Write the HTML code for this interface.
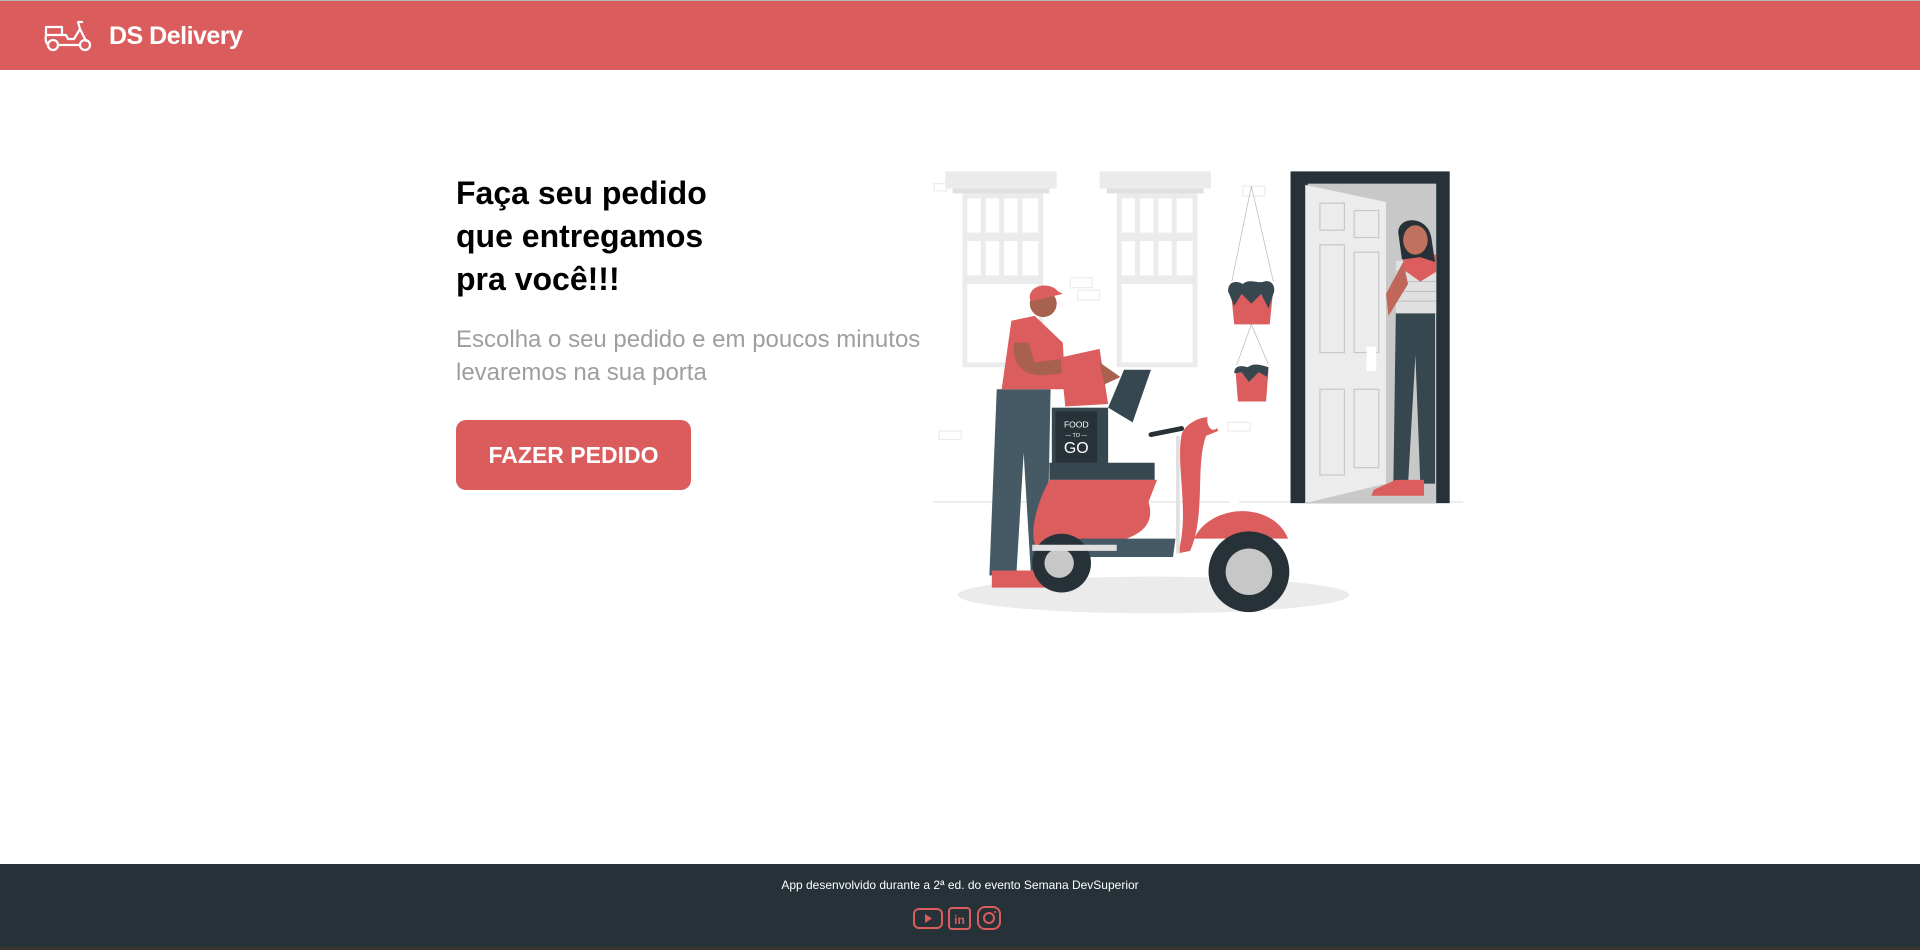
<!DOCTYPE html>
<html><head><meta charset="utf-8"><style>
*{margin:0;padding:0;box-sizing:border-box}
body{width:1920px;height:950px;position:relative;background:#fff;font-family:"Liberation Sans",sans-serif;overflow:hidden}
.top{position:absolute;left:0;top:0;width:1920px;height:1px;background:#b8b8b8}
header{position:absolute;left:0;top:1px;width:1920px;height:69px;background:#db5c5c}
.brand{position:absolute;left:109px;top:21px;color:#fff;font-weight:bold;font-size:25px;letter-spacing:-0.5px}
h1{position:absolute;left:456px;top:172px;font-size:32px;line-height:43px;font-weight:bold;color:#000}
.sub{position:absolute;left:456px;top:323px;font-size:24px;line-height:33px;color:#9e9e9e}
.btn{position:absolute;left:456px;top:420px;width:235px;height:70px;background:#db5c5c;border-radius:10px;color:#fff;font-weight:bold;font-size:23px;text-align:center;line-height:70px}
footer{position:absolute;left:0;top:864px;width:1920px;height:83px;background:#263238;color:#fff;text-align:center}
footer p{position:absolute;left:0;width:1920px;top:14px;font-size:12px}
.bot{position:absolute;left:0;top:947px;width:1920px;height:3px;background:#3b3530}
</style></head><body>
<div class="top"></div>
<header>
<svg style="position:absolute;left:44px;top:18px" width="50" height="34" viewBox="0 0 50 34" fill="none" stroke="#fff" stroke-width="2.2" stroke-linecap="round" stroke-linejoin="round">
<path d="M2 16 V8 H18 V16 M2 16 H22 L24 20 H30 L36 10 L34 3 H38"/>
<path d="M2 16 C1 20 2 24 4 26 M36 10 L42 22"/>
<circle cx="9" cy="26" r="5"/><circle cx="41" cy="26" r="5"/>
<path d="M14 26 H36"/>
</svg>
<div class="brand">DS Delivery</div>
</header>
<h1>Faça seu pedido<br>que entregamos<br>pra você!!!</h1>
<div class="sub">Escolha o seu pedido e em poucos minutos<br>levaremos na sua porta</div>
<div class="btn">FAZER PEDIDO</div>

<svg style="position:absolute;left:0;top:0" width="1920" height="950" viewBox="0 0 1568 776">
<line x1="762" y1="410" x2="1195" y2="410" stroke="#e0e0e0" stroke-width="1"/>
<ellipse cx="942" cy="486" rx="160" ry="15" fill="#ebebeb"/>
<g id="w1">
<rect x="772" y="140" width="91" height="14" fill="#ebebeb"/>
<rect x="778" y="154" width="79" height="4" fill="#e0e0e0"/>
<rect x="786" y="158" width="66" height="142" fill="#ebebeb"/>
<g fill="#fff">
<rect x="790" y="162" width="11" height="28"/><rect x="805" y="162" width="11" height="28"/><rect x="820" y="162" width="11" height="28"/><rect x="835" y="162" width="13" height="28"/>
<rect x="790" y="197" width="11" height="28"/><rect x="805" y="197" width="11" height="28"/><rect x="820" y="197" width="11" height="28"/><rect x="835" y="197" width="13" height="28"/>
<rect x="790" y="232" width="58" height="64"/>
</g></g>
<use href="#w1" transform="translate(126,0)"/>
<g fill="none" stroke="#ececec">
<rect x="763" y="150" width="10" height="6"/><rect x="874" y="227" width="18" height="8"/><rect x="880" y="237" width="18" height="8"/>
<rect x="767" y="352" width="18" height="7"/><rect x="1003" y="345" width="18" height="7"/><rect x="1015" y="152" width="18" height="8"/>
</g>
<g stroke="#bbb" stroke-width="0.6"><line x1="1022" y1="152" x2="1006" y2="230"/><line x1="1022" y1="152" x2="1040" y2="230"/><line x1="1022" y1="265" x2="1010" y2="298"/><line x1="1022" y1="265" x2="1036" y2="298"/></g>
<path d="M1005 235 H1040 L1037 265 H1008 Z" fill="#dc5d5d"/>
<path d="M1003 238 C1003 228 1012 230 1015 232 C1020 227 1028 232 1032 230 C1040 228 1042 236 1040 240 L1036 252 L1030 240 L1022 248 L1014 240 L1008 250 Z" fill="#37474f"/>
<path d="M1009 302 H1036 L1034 328 H1011 Z" fill="#dc5d5d"/>
<path d="M1008 305 C1008 297 1016 299 1019 300 C1024 296 1030 298 1036 300 L1035 308 L1028 304 L1020 312 L1014 304 Z" fill="#37474f"/>
<rect x="1054" y="140" width="130" height="271" fill="#263238"/>
<rect x="1068" y="150" width="105" height="261" fill="#c8c8c8"/>
<path d="M1066 151 L1132 165 V395 L1066 411 Z" fill="#ececec"/>
<g fill="none" stroke="#c8c8c8" stroke-width="1">
<rect x="1078" y="166" width="20" height="22"/><rect x="1106" y="172" width="20" height="22"/>
<rect x="1078" y="200" width="20" height="88"/><rect x="1106" y="206" width="20" height="82"/>
<rect x="1078" y="318" width="20" height="70"/><rect x="1106" y="318" width="20" height="64"/>
</g>
<rect x="1116" y="283" width="8" height="20" fill="#fff"/>
<path d="M1140 255 H1172 V395 H1160 L1156 290 L1150 395 H1138 Z" fill="#37474f"/>
<rect x="1140" y="213" width="33" height="43" fill="#e0e0e0"/>
<g stroke="#bdbdbd" stroke-width="0.8"><line x1="1140" y1="222" x2="1173" y2="222"/><line x1="1140" y1="230" x2="1173" y2="230"/><line x1="1140" y1="238" x2="1173" y2="238"/><line x1="1140" y1="246" x2="1173" y2="246"/></g>
<path d="M1146 208 H1173 V222 L1160 230 L1146 220 Z" fill="#dc5d5d"/>
<path d="M1146 214 L1132 240 L1134 258 L1150 232 Z" fill="#c0665a"/>
<path d="M1142 190 C1142 176 1166 176 1169 194 L1172 214 L1160 210 L1145 212 Z" fill="#263238"/>
<ellipse cx="1156" cy="196" rx="10" ry="12" fill="#c0725f"/>
<path d="M1122 400 L1140 392 H1163 V405 H1120 Z" fill="#dc5d5d"/>
<path d="M814 318 H858 L855 470 H842 L836 370 L830 470 H808 Z" fill="#455a64"/>
<path d="M810 466 H850 L855 480 H810 Z" fill="#dc5d5d"/>
<path d="M826 262 L845 258 L868 280 L870 318 H818 Z" fill="#dc5d5d"/>
<path d="M828 280 C826 310 850 310 878 302 L878 292 L845 296 L840 280 Z" fill="#a8604f"/>
<circle cx="852" cy="248" r="11" fill="#a8604f"/>
<path d="M841 244 C840 232 858 230 864 238 L868 240 L843 246 Z" fill="#dc5d5d"/>
<path d="M866 292 L898 285 L905 330 L870 332 Z" fill="#dc5d5d"/>
<path d="M898 296 L915 308 L902 314 Z" fill="#a8604f"/>
<path d="M905 333 L918 302 H940 L925 345 Z" fill="#37474f"/>
<rect x="859" y="333" width="46" height="48" fill="#37474f"/>
<rect x="862" y="336" width="34" height="42" fill="#263238"/>
<text x="879" y="349" font-size="7" fill="#fff" text-anchor="middle" font-family="Liberation Sans">FOOD</text>
<text x="879" y="357" font-size="4.5" fill="#fff" text-anchor="middle" font-family="Liberation Sans">— TO —</text>
<text x="879" y="370" font-size="13" fill="#fff" text-anchor="middle" font-family="Liberation Sans">GO</text>
<rect x="857" y="378" width="86" height="14" fill="#37474f"/>
<path d="M857 392 H945 L938 410 C944 430 930 440 900 445 L850 448 C840 448 842 420 857 392 Z" fill="#dc5d5d"/>
<path d="M880 440 H960 L958 455 H880 Z" fill="#455a64"/>
<path d="M965 355 C968 345 985 338 990 342 L995 352 L985 356 C976 380 985 420 972 450 L962 452 C972 420 960 380 965 355 Z" fill="#dc5d5d"/>
<path d="M962 356 L962 452" stroke="#e0e0e0" stroke-width="3" fill="none"/>
<line x1="940" y1="355" x2="965" y2="350" stroke="#263238" stroke-width="4" stroke-linecap="round"/>
<ellipse cx="991" cy="343" rx="5" ry="8" fill="#fff"/>
<circle cx="1008" cy="407" r="5" fill="#fff"/>
<path d="M975 440 C990 410 1040 410 1052 440 Z" fill="#dc5d5d"/>
<circle cx="867" cy="460" r="24" fill="#263238"/><circle cx="865" cy="460" r="12" fill="#c7c7c7"/>
<circle cx="1020" cy="467" r="33" fill="#263238"/><circle cx="1020" cy="467" r="19" fill="#c7c7c7"/>
<path d="M843 445 H912 V450 H843 Z" fill="#e0e0e0"/>
</svg>

<footer>
<p>App desenvolvido durante a 2ª ed. do evento Semana DevSuperior</p>
<svg style="position:absolute;left:913px;top:42px" width="96" height="24" viewBox="0 0 96 24" fill="none" stroke="#db5c5c" stroke-width="2">
<rect x="1" y="3" width="28" height="19" rx="5"/><path d="M12 8 L19 12.5 L12 17 Z" fill="#db5c5c" stroke="none"/>
<rect x="36" y="2" width="21" height="21" rx="3"/>
<text x="46.5" y="18" font-size="12" font-weight="bold" fill="#db5c5c" stroke="none" text-anchor="middle" font-family="Liberation Sans">in</text>
<rect x="65" y="1" width="22" height="22" rx="7"/><circle cx="76" cy="12" r="5"/><circle cx="82" cy="6" r="1" fill="#db5c5c" stroke="none"/>
</svg>
</footer>
<div class="bot"></div>
</body></html>
